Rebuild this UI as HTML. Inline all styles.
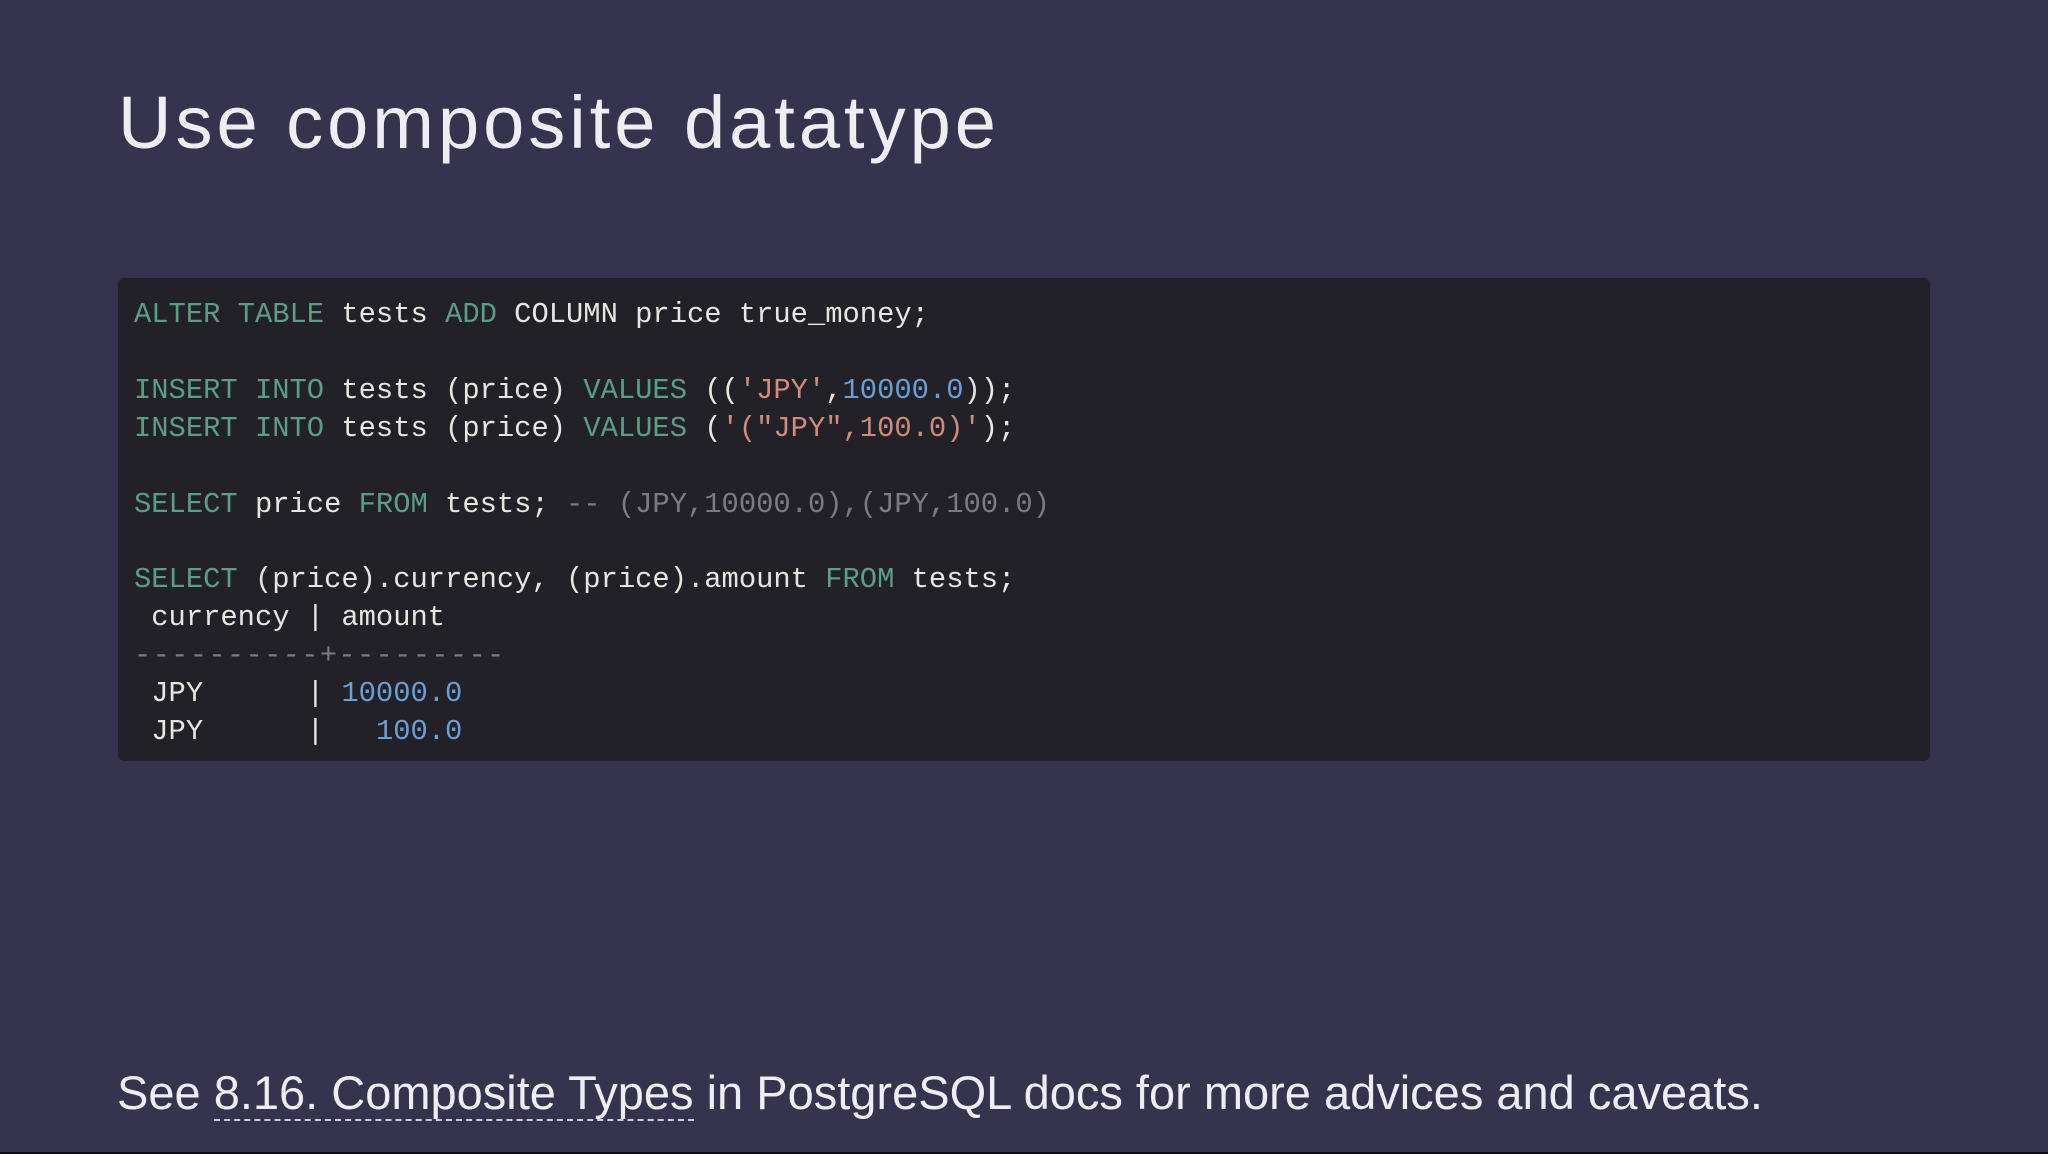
<!DOCTYPE html>
<html><head><meta charset="utf-8"><style>
html,body{margin:0;padding:0}
body{width:2048px;height:1154px;background:#36334f;position:relative;overflow:hidden;font-family:"Liberation Sans",sans-serif;color:#ecebef}
h1{position:absolute;left:118px;top:73px;margin:0;font-weight:400;font-size:74px;line-height:100px;letter-spacing:4px;color:#eeedf2;white-space:nowrap}
.code{position:absolute;left:118px;top:278px;width:1812px;height:483px;background:#222128;border-radius:6px}
pre{margin:0;position:absolute;left:16px;top:18px;font-family:"Liberation Mono",monospace;font-size:28.8px;line-height:37.9px;color:#e8e6e0}
.k{color:#5a9e83}.s{color:#d18a7b}.n{color:#6a9fd4}.c{color:#7b7b82}
.d{letter-spacing:1.3px}
.foot{position:absolute;left:117px;top:1063px;font-size:47px;line-height:60px;white-space:nowrap;color:#eeedf2}
.foot u{text-decoration:none;border-bottom:2px dashed #cfcdd8;padding-bottom:0}
.bar{position:absolute;left:0;bottom:0;width:2048px;height:2px;background:#0c0b10}
</style></head><body>
<h1>Use composite datatype</h1>
<div class="code"><pre><span class="k">ALTER TABLE</span> tests <span class="k">ADD</span> COLUMN price true_money;

<span class="k">INSERT INTO</span> tests (price) <span class="k">VALUES</span> ((<span class="s">'JPY'</span>,<span class="n">10000.0</span>));
<span class="k">INSERT INTO</span> tests (price) <span class="k">VALUES</span> (<span class="s">'("JPY",100.0)'</span>);

<span class="k">SELECT</span> price <span class="k">FROM</span> tests; <span class="c">-- (JPY,10000.0),(JPY,100.0)</span>

<span class="k">SELECT</span> (price).currency, (price).amount <span class="k">FROM</span> tests;
 currency | amount
<span class="c d">----------+---------</span>
 JPY      | <span class="n">10000.0</span>
 JPY      |   <span class="n">100.0</span></pre></div>
<div class="foot">See <u>8.16. Composite Types</u> in PostgreSQL docs for more advices and caveats.</div>
<div class="bar"></div>
</body></html>
